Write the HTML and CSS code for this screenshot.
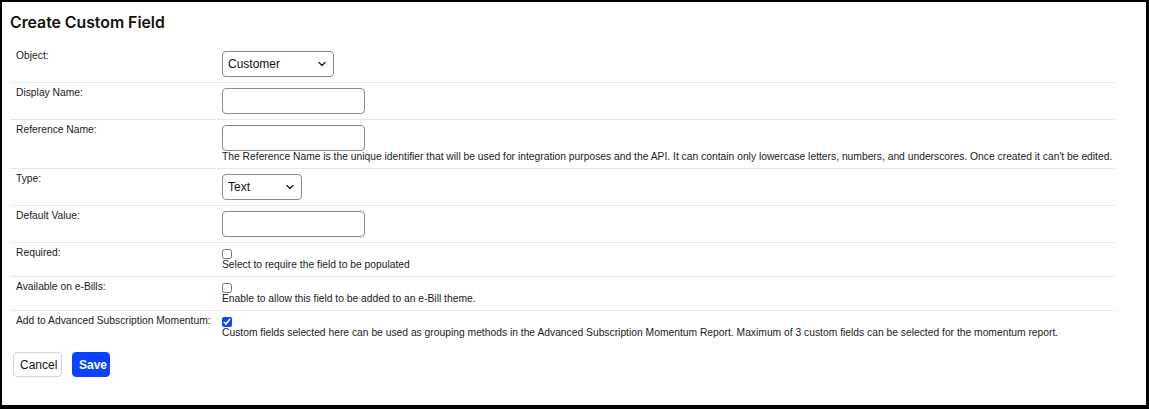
FILE: index.html
```html
<!DOCTYPE html>
<html>
<head>
<meta charset="utf-8">
<link rel="stylesheet" href="styles.css">
</head>
<body>
<div class="frame">
  <h1 class="title">Create Custom Field</h1>
  <div class="form">
    <div class="row">
      <div class="label">Object:</div>
      <div class="control">
        <div class="select-wrap w-object">
          <select class="select"><option>Customer</option></select>
          <svg class="chev" width="8" height="6" viewBox="0 0 8 6"><path d="M1 1.5 L4 4.5 L7 1.5" fill="none" stroke="#222" stroke-width="1.4" stroke-linecap="round" stroke-linejoin="round"/></svg>
        </div>
      </div>
    </div>
    <div class="row">
      <div class="label">Display Name:</div>
      <div class="control"><input class="input" type="text"></div>
    </div>
    <div class="row">
      <div class="label">Reference Name:</div>
      <div class="control">
        <input class="input" type="text">
        <div class="help">The Reference Name is the unique identifier that will be used for integration purposes and the API. It can contain only lowercase letters, numbers, and underscores. Once created it can't be edited.</div>
      </div>
    </div>
    <div class="row">
      <div class="label">Type:</div>
      <div class="control">
        <div class="select-wrap w-type">
          <select class="select"><option>Text</option></select>
          <svg class="chev" width="8" height="6" viewBox="0 0 8 6"><path d="M1 1.5 L4 4.5 L7 1.5" fill="none" stroke="#222" stroke-width="1.4" stroke-linecap="round" stroke-linejoin="round"/></svg>
        </div>
      </div>
    </div>
    <div class="row">
      <div class="label">Default Value:</div>
      <div class="control"><input class="input" type="text"></div>
    </div>
    <div class="row">
      <div class="label">Required:</div>
      <div class="control">
        <input class="check" type="checkbox">
        <div class="help">Select to require the field to be populated</div>
      </div>
    </div>
    <div class="row">
      <div class="label">Available on e-Bills:</div>
      <div class="control">
        <input class="check" type="checkbox">
        <div class="help">Enable to allow this field to be added to an e-Bill theme.</div>
      </div>
    </div>
    <div class="row last">
      <div class="label">Add to Advanced Subscription Momentum:</div>
      <div class="control">
        <input class="check" type="checkbox" checked>
        <div class="help">Custom fields selected here can be used as grouping methods in the Advanced Subscription Momentum Report. Maximum of 3 custom fields can be selected for the momentum report.</div>
      </div>
    </div>
  </div>
  <div class="actions">
    <button class="btn btn-cancel">Cancel</button>
    <button class="btn btn-save">Save</button>
  </div>
</div>
</body>
</html>
```

FILE: styles.css
```css
html, body {
  margin: 0;
  padding: 0;
  background: #fff;
}
body {
  font-family: "Liberation Sans", Arial, sans-serif;
  color: #1a1a1a;
}
.frame {
  box-sizing: border-box;
  width: 1149px;
  height: 409px;
  border-style: solid;
  border-color: #000;
  border-width: 2px 3px 4px 2px;
  padding: 0 0 0 8px;
  background: #fff;
}
.title {
  margin: 0;
  padding-top: 11px;
  height: 32px;
  box-sizing: border-box;
  font-family: Inter, "Liberation Sans", sans-serif;
  font-size: 15.8px;
  font-weight: 600;
  line-height: 20px;
  color: #111;
}
.form {
  width: 1105px;
  margin-top: 12px;
}
.row {
  display: flex;
  border-bottom: 1px solid #e8e8e8;
  padding: 5px 0 5px 0;
}
.row.last {
  border-bottom: none;
}
.label {
  width: 212px;
  flex: none;
  box-sizing: border-box;
  padding-left: 6px;
  margin-top: -1px;
  font-size: 10.3px;
  line-height: 12px;
  color: #1a1a1a;
}
.control {
  flex: 1;
  display: flex;
  flex-direction: column;
  align-items: flex-start;
}
.help {
  font-size: 10.3px;
  line-height: 12px;
  color: #1a1a1a;
  white-space: nowrap;
}
.input {
  box-sizing: border-box;
  width: 143px;
  height: 26px;
  margin: 0;
  border: 1px solid #8a8a8a;
  border-radius: 4px;
  background: #fff;
  padding: 0 6px;
  font-family: "Liberation Sans", sans-serif;
  font-size: 12px;
}
.select-wrap {
  position: relative;
  height: 26px;
}
.w-object { width: 112px; }
.w-type { width: 80px; }
.select {
  appearance: none;
  -webkit-appearance: none;
  box-sizing: border-box;
  width: 100%;
  height: 26px;
  margin: 0;
  border: 1px solid #8a8a8a;
  border-radius: 4px;
  background: #fff;
  padding: 0 0 0 5px;
  font-family: "Liberation Sans", sans-serif;
  font-size: 12px;
  color: #111;
}
.chev {
  position: absolute;
  right: 8px;
  top: 10px;
}
.check {
  width: 10px;
  height: 10px;
  margin: 1px 0 0 0;
  accent-color: #0a49ff;
}
.actions {
  display: flex;
  gap: 10px;
  padding: 8px 0 0 3px;
}
.btn {
  box-sizing: border-box;
  height: 25px;
  border-radius: 4px;
  font-family: "Liberation Sans", sans-serif;
  font-size: 12px;
  padding: 0 6px;
  margin: 0;
}
.btn-cancel {
  background: #fff;
  border: 1px solid #d4d4d4;
  color: #111;
  width: 49px;
}
.btn-save {
  background: #0a43ff;
  border: 1px solid #0a43ff;
  color: #fff;
  font-weight: 700;
  width: 38px;
}
```
